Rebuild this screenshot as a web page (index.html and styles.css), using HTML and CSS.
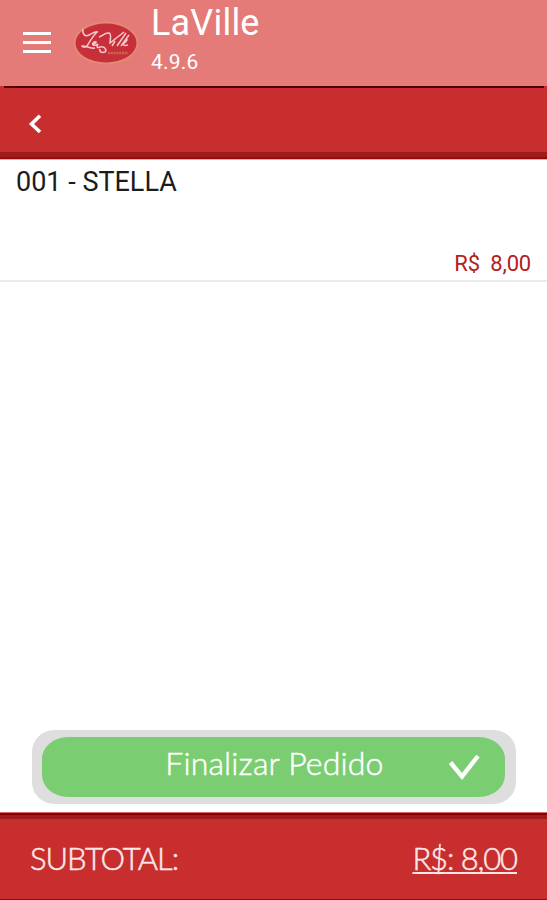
FILE: index.html
```
<!DOCTYPE html>
<html lang="pt-BR">
<head>
    <meta charset="UTF-8">
    <meta name="viewport" content="width=device-width, initial-scale=1.0">
    <title>LaVille</title>
    <link rel="stylesheet" href="styles.css">
</head>
<body>
    <header class="app-header">
        <svg class="menu" viewBox="0 0 28 22" fill="#fff">
            <path d="M0 0h28v3H0zM0 9h28v3H0zM0 18h28v3H0z"/>
        </svg>
        <svg class="logo" viewBox="0 0 66 44" fill="none">
            <ellipse cx="33" cy="22" rx="32.5" ry="21.5" fill="#e28b70"/>
            <ellipse cx="33" cy="22" rx="30.5" ry="19.5" fill="#c7303a"/>
            <path d="M10 8c-1 5 2 8 6 6s6-4 9-3M24 11c-4 4-7 9-10 14-2 2-5 1-5 0 3-1 7 3 13 2M20 23c4-1 4-3 1-2-3 2-1 5 4 2M25 23c-2 4 0 4 2 3 5-1 7 3 5 5-3 1-6 0-5-3" stroke="#f6c8cc" stroke-width="1.5"/>
            <path d="M26 16c4-1 6-5 10-4 3 1 1 6 1 10L51 11M42 20l-3 5M53 12l-9 13M56 14l-8 11M50 23c5-4 5-6 2-3-3 5-1 5 3 4" stroke="#f6c8cc" stroke-width="1.5"/>
            <path d="M35 32h20" stroke="#c96b45" stroke-width="2.6" stroke-dasharray="2 .8"/>
        </svg>
        <div class="brand">
            <h1>LaVille</h1>
            <p>4.9.6</p>
        </div>
    </header>

    <nav class="toolbar">
        <svg class="back" viewBox="0 0 14 20" fill="none" stroke="#fff" stroke-width="3.6">
            <path d="M12 1.8L3.5 10l8.5 8"/>
        </svg>
    </nav>

    <main class="order">
        <div class="item">
            <h2>001 - STELLA</h2>
            <span class="price">R$&nbsp; 8,00</span>
        </div>
        <button class="finish">
            <span class="finish-inner">
                <span class="finish-label">Finalizar Pedido</span>
                <svg class="check" viewBox="0 0 32 28" fill="none" stroke="#fff" stroke-width="4.4">
                    <path d="M2.5 9.5L14 23.5 30 3"/>
                </svg>
            </span>
        </button>
    </main>

    <footer class="subtotal">
        <span class="label">SUBTOTAL:</span>
        <span class="total">R$: 8,00</span>
    </footer>
</body>
</html>
```

FILE: styles.css
```
* {
    margin: 0;
    padding: 0;
    box-sizing: border-box;
}

body {
    height: 900px;
    display: flex;
    flex-direction: column;
    background: #fff;
    font-family: Roboto, sans-serif;
    overflow: hidden;
}

.app-header {
    height: 86px;
    display: flex;
    align-items: flex-start;
    padding-left: 23px;
    background: #e57b79;
    color: #fff;
}

.menu {
    width: 28px;
    height: 22px;
    margin-top: 32px;
}

.logo {
    width: 66px;
    height: 44px;
    margin: 21px 12px 0 22px;
}

.brand h1 {
    margin-top: 2px;
    font-size: 36px;
    font-weight: 400;
    line-height: 42px;
    letter-spacing: 0.2px;
}

.brand p {
    margin-top: 6px;
    font-size: 21px;
    line-height: 25px;
    letter-spacing: 0.2px;
}

.toolbar {
    height: 74px;
    padding: 28px 0 0 28px;
    background: linear-gradient(#c72e2d 66px, #a01c1c 66px, #a01c1c 71px, #960d0d 71px, #960d0d 73px, #e3a9a9 73px);
    position: relative;
}

/* dark line under the header, short of both edges */
.toolbar::before {
    content: "";
    position: absolute;
    top: 0;
    left: 4px;
    right: 3px;
    height: 2px;
    background: #4d0000;
}

.back {
    display: block;
    width: 14px;
    height: 20px;
}

.order {
    flex: 1;
    display: flex;
    flex-direction: column;
    justify-content: space-between;
    align-items: center;
    padding-bottom: 8px;
}

.item {
    width: 100%;
    height: 122px;
    display: flex;
    flex-direction: column;
    justify-content: space-between;
    padding: 6px 16px 3px;
    border-bottom: 2px solid #ebebeb;
}

.item h2 {
    font-size: 27px;
    font-weight: 400;
    line-height: 32px;
    color: #1c1c1c;
}

.price {
    align-self: flex-end;
    font-size: 22px;
    line-height: 26px;
    letter-spacing: -0.2px;
    color: #b42020;
}

.finish {
    width: 484px;
    height: 74px;
    padding: 7px 11px 7px 10px;
    border: 0;
    border-radius: 22px;
    background: #dedede;
}

.finish-inner {
    height: 60px;
    display: flex;
    align-items: center;
    justify-content: flex-end;
    padding-right: 25px;
    border-radius: 26px / 22px;
    background: #7acd70;
}

.finish-label {
    margin: -9px 64px 0 0;
    font: 300 32px/40px Lato, sans-serif;
    letter-spacing: 0.15px;
    -webkit-text-stroke: 0.5px;
    color: #fff;
}

.check {
    width: 32px;
    height: 28px;
}

.subtotal {
    height: 88px;
    display: flex;
    align-items: center;
    justify-content: space-between;
    padding: 5px 30px 0;
    background: #c72e2d;
    border-bottom: 1px solid #5e2020;
    box-shadow: inset 0 1px #d96a6a, inset 0 3px #8a0000, inset 0 7px #a01c1c;
    color: #fbe9e9;
    font: 300 31px/40px Lato, sans-serif;
    letter-spacing: -1px;
    -webkit-text-stroke: 0.5px;
}

.total {
    letter-spacing: -1.1px;
    text-decoration: underline;
    text-decoration-thickness: 2px;
    text-decoration-skip-ink: none;
    text-underline-offset: 2px;
}
```
